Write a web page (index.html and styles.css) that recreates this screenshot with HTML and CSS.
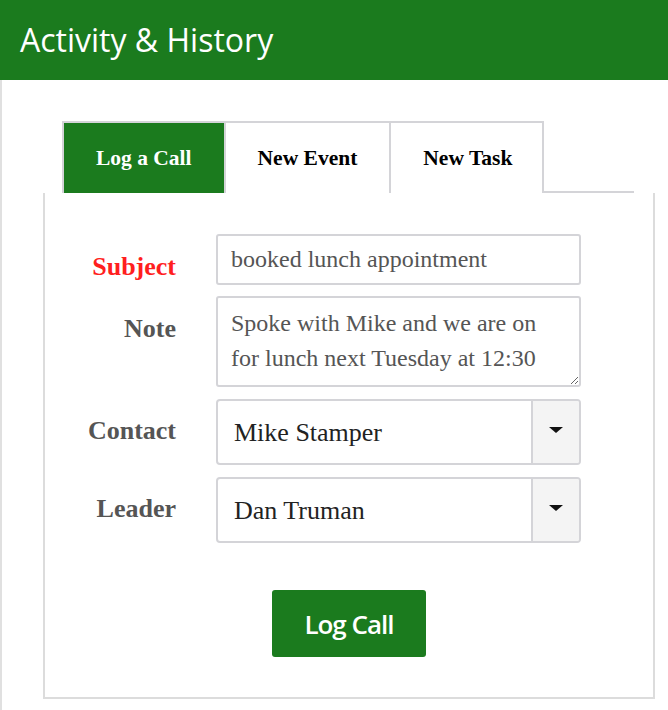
FILE: index.html
```html
<!DOCTYPE html>
<html lang="en">
<head>
    <meta charset="UTF-8">
    <meta name="viewport" content="width=device-width, initial-scale=1.0">
    <title>Activity &amp; History</title>
    <link rel="stylesheet" href="styles.css">
</head>
<body>
    <div class="header">
        <h1>Activity &amp; History</h1>
    </div>

    <div class="content">
        <ul class="tabs">
            <li class="tab active">Log a Call</li>
            <li class="tab">New Event</li>
            <li class="tab last">New Task</li>
        </ul>

        <div class="panel">
            <form id="callForm" class="call-form">
                <label for="callSubject" class="required">Subject</label>
                <input type="text" id="callSubject" name="subject" value="booked lunch appointment">

                <label for="callNote">Note</label>
                <textarea id="callNote" name="note" rows="2">Spoke with Mike and we are on for lunch next Tuesday at 12:30</textarea>

                <label>Contact</label>
                <div class="select">
                    <span class="select-value">Mike Stamper</span>
                    <span class="select-btn"><span class="caret"></span></span>
                </div>

                <label>Leader</label>
                <div class="select">
                    <span class="select-value">Dan Truman</span>
                    <span class="select-btn"><span class="caret"></span></span>
                </div>
            </form>

            <div class="actions">
                <button type="submit" form="callForm" class="submit-btn">Log Call</button>
            </div>
        </div>
    </div>
</body>
</html>
```

FILE: styles.css
```css
body {
    margin: 0;
    padding: 0;
    background-color: #ffffff;
    font-family: "Liberation Serif", "Times New Roman", serif;
}

.header {
    height: 80px;
    background-color: #1b7b1e;
    padding-left: 20px;
}

.header h1 {
    margin: 0;
    font-family: "Open Sans", sans-serif;
    font-weight: 400;
    font-size: 32px;
    line-height: 80px;
    color: #ffffff;
}

.content {
    border-left: 2px solid #e0e0e0;
    padding: 41px 0 40px 41px;
}

/* tab strip */
.tabs {
    display: flex;
    list-style: none;
    margin: 0 0 0 19px;
    padding: 0;
    width: 572px;
    border-bottom: 2px solid #d4d4d8;
    height: 70px;
}

.tab {
    height: 72px;
    box-sizing: border-box;
    padding: 0 32px;
    border-top: 2px solid #d4d4d8;
    border-left: 2px solid #d4d4d8;
    background-color: #ffffff;
    display: flex;
    align-items: center;
    font-weight: bold;
    font-size: 21.5px;
    color: #000000;
}

.tab.last {
    border-right: 2px solid #d4d4d8;
    padding-right: 30px;
}

.tab.active {
    background-color: #1b7b1e;
    color: #ffffff;
}

/* panel */
.panel {
    width: 612px;
    box-sizing: border-box;
    border: 2px solid #dcdcdc;
    border-top: none;
    padding: 41px 0 40px 0;
}

.call-form {
    display: grid;
    grid-template-columns: 131px 365px;
    column-gap: 40px;
    row-gap: 11px;
}

.call-form label {
    text-align: right;
    font-weight: bold;
    font-size: 26px;
    line-height: 30px;
    padding-top: 18px;
    color: #555555;
}

.call-form label.required {
    color: #ff1f1f;
}

.call-form input,
.call-form textarea {
    width: 100%;
    box-sizing: border-box;
    margin: 0;
    border: 2px solid #d4d4d8;
    border-radius: 3px;
    font-family: "Liberation Serif", "Times New Roman", serif;
    font-size: 24px;
    color: #555555;
    padding: 0 13px;
}

.call-form input {
    height: 51px;
    line-height: 47px;
}

.call-form textarea {
    height: 91px;
    line-height: 35px;
    padding-top: 8px;
    resize: vertical;
}

.select {
    display: flex;
    height: 66px;
    box-sizing: border-box;
    border: 2px solid #d4d4d8;
    border-radius: 4px;
    overflow: hidden;
    margin-top: 1px;
}

.select-value {
    flex: 1;
    padding-left: 16px;
    font-size: 26px;
    line-height: 64px;
    color: #222222;
}

.select-btn {
    width: 48px;
    border-left: 2px solid #d4d4d8;
    background-color: #f4f4f4;
    display: flex;
    align-items: center;
    justify-content: center;
    padding-bottom: 5px;
    box-sizing: border-box;
}

.caret {
    width: 0;
    height: 0;
    border-left: 7px solid transparent;
    border-right: 7px solid transparent;
    border-top: 6px solid #111111;
}

.actions {
    display: flex;
    justify-content: center;
    margin-top: 47px;
}

.submit-btn {
    width: 154px;
    height: 67px;
    padding: 0;
    border: none;
    border-radius: 3px;
    background-color: #1b7b1e;
    color: #ffffff;
    font-family: "Open Sans", sans-serif;
    font-weight: 600;
    font-size: 26px;
    letter-spacing: -1px;
    cursor: pointer;
}
```
